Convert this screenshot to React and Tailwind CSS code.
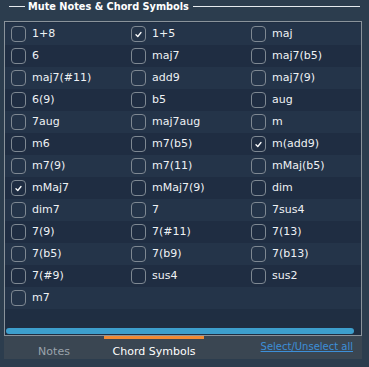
import React from "react";

const items = [
  ["1+8", false], ["1+5", true], ["maj", false],
  ["6", false], ["maj7", false], ["maj7(b5)", false],
  ["maj7(#11)", false], ["add9", false], ["maj7(9)", false],
  ["6(9)", false], ["b5", false], ["aug", false],
  ["7aug", false], ["maj7aug", false], ["m", false],
  ["m6", false], ["m7(b5)", false], ["m(add9)", true],
  ["m7(9)", false], ["m7(11)", false], ["mMaj(b5)", false],
  ["mMaj7", true], ["mMaj7(9)", false], ["dim", false],
  ["dim7", false], ["7", false], ["7sus4", false],
  ["7(9)", false], ["7(#11)", false], ["7(13)", false],
  ["7(b5)", false], ["7(b9)", false], ["7(b13)", false],
  ["7(#9)", false], ["sus4", false], ["sus2", false],
  ["m7", false],
];

const rows = [];
for (let i = 0; i < items.length; i += 3) rows.push(items.slice(i, i + 3));

function Box({ checked }) {
  return (
    <div className="w-[15px] h-[16px] rounded-[4px] border border-[#7e8892] flex items-center justify-center shrink-0">
      {checked && (
        <svg width="9" height="9" viewBox="0 0 9 9">
          <polyline points="2,4.8 3.8,6.5 7,2.5" fill="none" stroke="#ffffff" strokeWidth="1.3" strokeLinecap="round" strokeLinejoin="round" />
        </svg>
      )}
    </div>
  );
}

export default function App() {
  return (
    <div
      className="w-[369px] h-[367px] bg-[#2c3d4e] overflow-hidden"
      style={{ fontFamily: '"DejaVu Sans", Verdana, sans-serif' }}
    >
      <div className="flex items-center h-[13px] pl-[9px] pr-[9px]">
        <div className="w-[16px] h-px bg-[#e6eaee]" />
        <div className="ml-[3px] mr-[4px] text-[9.75px] leading-[12px] font-bold text-white whitespace-nowrap">
          Mute Notes &amp; Chord Symbols
        </div>
        <div className="flex-1 h-px bg-[#e6eaee]" />
      </div>
      <div className="ml-[4px] mt-[8px] w-[358px] h-[315px] border border-[#8a939b] bg-[#1f2e42] flex flex-col">
        <div className="pt-[1px]">
          {rows.map((r, i) => (
            <div
              key={i}
              className={`h-[22px] flex items-center pl-[6px] overflow-hidden ${i % 2 === 0 ? "bg-[#243449]" : "bg-[#1f2d42]"}`}
            >
              {r.map(([label, checked]) => (
                <div key={label} className="w-[120px] shrink-0 flex items-center gap-[6px]">
                  <Box checked={checked} />
                  <span className="text-[11px] leading-[14px] text-[#eef1f4] whitespace-nowrap">{label}</span>
                </div>
              ))}
            </div>
          ))}
        </div>
        <div className="flex-1" />
        <div className="ml-[1px] w-[348px] h-[6px] rounded-full bg-[#3d9fcd] mb-[1px]" />
      </div>
      <div className="ml-[4px] w-[358px] h-[23px] bg-[#3a4652] flex items-start">
        <div className="w-[100px] pt-[9px] text-center text-[11px] leading-[14px] text-[#9aa3ac]">Notes</div>
        <div className="w-[100px] border-t-[3px] border-[#f08a35] pt-[6px] text-center text-[11px] leading-[14px] text-white">
          Chord Symbols
        </div>
        <div className="ml-auto mr-[9px] pt-[4px] text-[10px] leading-[14px] text-[#3d8fd8] underline whitespace-nowrap">
          Select/Unselect all
        </div>
      </div>
    </div>
  );
}
